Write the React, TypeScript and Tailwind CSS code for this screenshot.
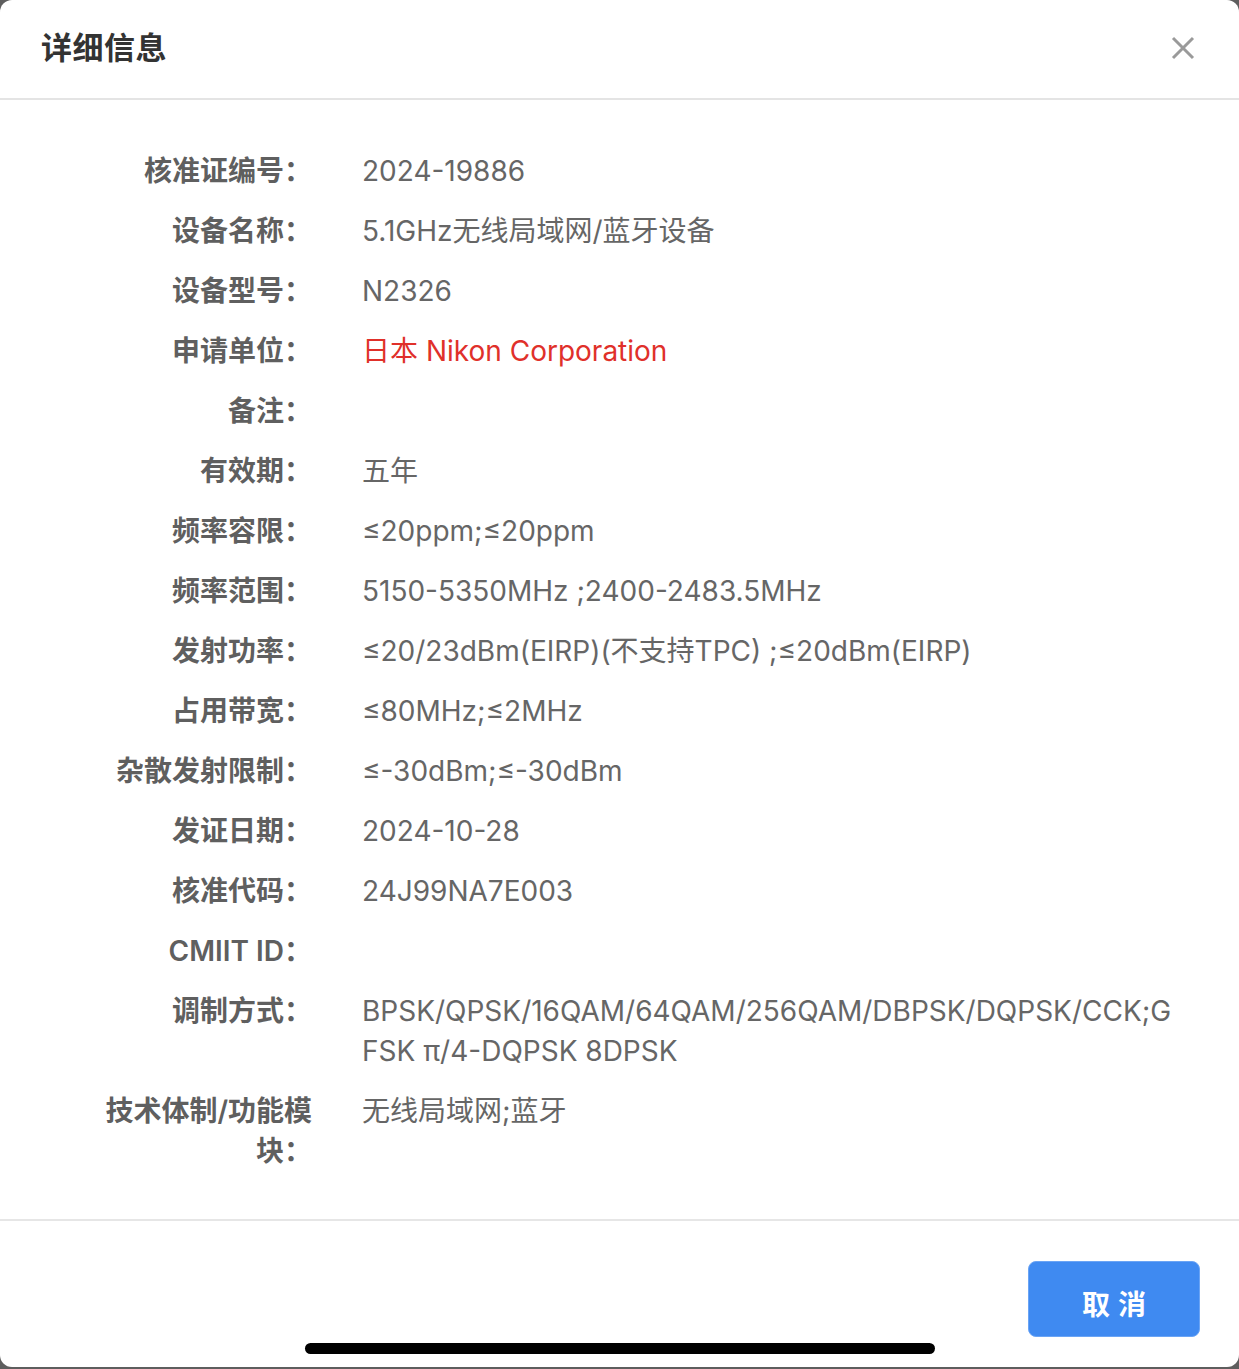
import React from "react";

const rows: { label: string; value: string; red?: boolean }[] = [
  { label: "核准证编号：", value: "2024-19886" },
  { label: "设备名称：", value: "5.1GHz无线局域网/蓝牙设备" },
  { label: "设备型号：", value: "N2326" },
  { label: "申请单位：", value: "日本 Nikon Corporation", red: true },
  { label: "备注：", value: "" },
  { label: "有效期：", value: "五年" },
  { label: "频率容限：", value: "≤20ppm;≤20ppm" },
  { label: "频率范围：", value: "5150-5350MHz ;2400-2483.5MHz" },
  { label: "发射功率：", value: "≤20/23dBm(EIRP)(不支持TPC) ;≤20dBm(EIRP)" },
  { label: "占用带宽：", value: "≤80MHz;≤2MHz" },
  { label: "杂散发射限制：", value: "≤-30dBm;≤-30dBm" },
  { label: "发证日期：", value: "2024-10-28" },
  { label: "核准代码：", value: "24J99NA7E003" },
  { label: "CMIIT ID：", value: "" },
  {
    label: "调制方式：",
    value: "BPSK/QPSK/16QAM/64QAM/256QAM/DBPSK/DQPSK/CCK;GFSK π/4-DQPSK 8DPSK",
  },
  { label: "技术体制/功能模块：", value: "无线局域网;蓝牙" },
];

export default function App() {
  return (
    <div
      className="relative w-[1239px] h-[1369px] bg-[#5e5e5e] overflow-hidden"
      style={{ fontFamily: 'Inter, "Noto Sans CJK SC", sans-serif' }}
    >
      <div className="flex flex-col w-[1239px] h-[1367px] bg-white rounded-[12px] overflow-hidden">
        {/* Header */}
        <div className="flex items-center justify-between h-[100px] pl-[41px] pr-[44px] border-b-2 border-[#e4e4e4] shrink-0">
          <div className="text-[31px] font-bold text-[#333333] tracking-[0.5px] leading-none -mt-[4px]">详细信息</div>
          <svg width="24" height="24" viewBox="0 0 24 24" className="-mt-[2px]">
            <path d="M2 2 L22 22 M22 2 L2 22" stroke="#9a9a9a" strokeWidth="3" strokeLinecap="butt" />
          </svg>
        </div>

        {/* Body */}
        <div className="flex flex-col gap-5 pt-[51px] pb-[48px] pl-[100px] pr-[55px] border-b-2 border-[#e6e6e6]">
          {rows.map((r) => (
            <div key={r.label} className="flex items-start text-[28px] leading-[40px]">
              <div className="w-[212px] shrink-0 text-right font-semibold text-[#5f5f5f] break-all">
                {r.label}
              </div>
              <div
                className={
                  "ml-[50px] flex-1 min-h-[40px] break-all " +
                  (r.red ? "text-[#e0302a]" : "text-[#666666]")
                }
              >
                {r.value}
              </div>
            </div>
          ))}
        </div>

        {/* Footer */}
        <div className="flex justify-end pt-[40px] pr-[39px]">
          <button className="w-[172px] h-[76px] rounded-[8px] bg-[#3f8af1] border border-[#6aa4f5] text-white text-[28px] font-bold tracking-[8px] pl-[8px] pt-[11px]">
            取消
          </button>
        </div>
      </div>

      {/* iOS home indicator */}
      <div className="absolute left-[305px] top-[1343px] w-[630px] h-[11px] rounded-full bg-black" />
    </div>
  );
}
